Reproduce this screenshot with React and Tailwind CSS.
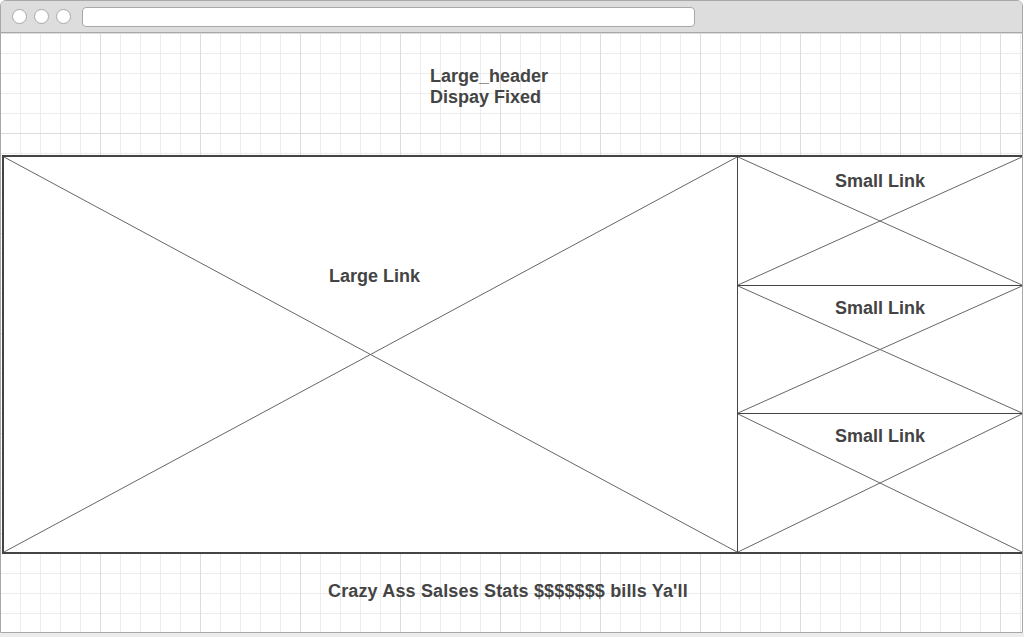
const Cross = () => (
    <svg className="absolute inset-0 h-full w-full pointer-events-none" xmlns="http://www.w3.org/2000/svg">
        <line x1="0" y1="0" x2="100%" y2="100%" stroke="#666" strokeWidth="1" />
        <line x1="0" y1="100%" x2="100%" y2="0" stroke="#666" strokeWidth="1" />
    </svg>
);

const SmallLink = ({ className, pad }) => (
    <div className={`relative ${className}`}>
        <Cross />
        <div className={`relative text-center ${pad}`}>Small Link</div>
    </div>
);

const App = () => {
    return (
        <div className="w-[1024px] h-[637px] bg-white overflow-hidden font-['Liberation_Sans',Arial,sans-serif] text-[#444] font-bold text-[18px] leading-[21px]">
            <div className="w-[1023px] h-[633px] flex flex-col border border-[#a8a8a8] rounded-t-[6px] overflow-hidden">
                {/* browser chrome */}
                <div className="h-[32px] shrink-0 bg-[#dddddd] border-b border-[#a8a8a8] flex items-center pl-[11px] gap-[7px]">
                    <span className="w-[15px] h-[15px] rounded-full bg-white border border-[#a8a8a8]" />
                    <span className="w-[15px] h-[15px] rounded-full bg-white border border-[#a8a8a8]" />
                    <span className="w-[15px] h-[15px] rounded-full bg-white border border-[#a8a8a8]" />
                    <span className="ml-[4px] w-[613px] h-[20px] rounded-[4px] bg-white border border-[#a8a8a8]" />
                </div>

                {/* page */}
                <div className="flex-1 flex flex-col bg-white bg-[linear-gradient(to_right,#dcdcdc_1px,transparent_1px),linear-gradient(to_bottom,#dcdcdc_1px,transparent_1px),linear-gradient(to_right,#ececec_1px,transparent_1px),linear-gradient(to_bottom,#ececec_1px,transparent_1px)] bg-[size:100px_100px,100px_100px,20px_20px,20px_20px] bg-[position:-1px_0,-1px_0,-1px_0,-1px_0]">
                    <div className="h-[122px] shrink-0 pt-[33px] pl-[429px]">
                        <div>Large_header</div>
                        <div>Dispay Fixed</div>
                    </div>

                    <div className="ml-px h-[399px] shrink-0 flex border-2 border-[#444] border-r-0 bg-white">
                        <div className="relative flex-1 border-r border-[#444]">
                            <Cross />
                            <div className="relative pt-[109px] pl-[325px]">Large Link</div>
                        </div>
                        <div className="w-[284px] flex flex-col">
                            <SmallLink className="h-[129px] border-b border-[#444]" pad="pt-[14px]" />
                            <SmallLink className="h-[128px] border-b border-[#444]" pad="pt-[12px]" />
                            <SmallLink className="flex-1" pad="pt-[12px]" />
                        </div>
                    </div>

                    <div className="pt-[27px] pl-[327px] tracking-[0.15px]">Crazy Ass Salses Stats $$$$$$$ bills Ya'll</div>
                </div>
            </div>
            <div className="h-[4px] bg-[#ececec]" />
        </div>
    );
};

export default App;
